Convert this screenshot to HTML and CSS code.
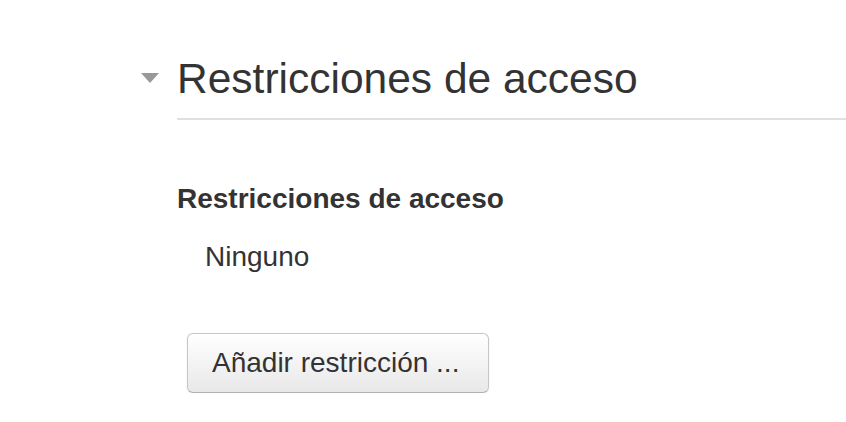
FILE: index.html
```html
<!DOCTYPE html>
<html lang="es">
<head>
  <meta charset="UTF-8">
  <title>Restricciones de acceso</title>
  <link rel="stylesheet" href="styles.css">
</head>
<body>
  <div class="section">
    <h2 class="section-title">
      <span class="toggle"></span>
      Restricciones de acceso
    </h2>
    <div class="section-body">
      <div class="field-label">Restricciones de acceso</div>
      <div class="field-value">Ninguno</div>
      <button type="button" class="btn">Añadir restricción ...</button>
    </div>
  </div>
</body>
</html>
```

FILE: styles.css
```css
* {
  margin: 0;
  padding: 0;
  box-sizing: border-box;
  font-family: 'Liberation Sans', Arial, sans-serif;
}

body {
  background: #fff;
  color: #333;
  padding: 53px 0 0 177px;
}

.section-title {
  position: relative;
  font-size: 42.5px;
  font-weight: normal;
  line-height: 52px;
  padding-bottom: 13px;
  border-bottom: 2px solid #e0e0e0;
}

.toggle {
  position: absolute;
  left: -36px;
  top: 20px;
  width: 0;
  height: 0;
  border-left: 9px solid transparent;
  border-right: 9px solid transparent;
  border-top: 10px solid #999;
}

.section-body {
  padding-top: 62px;
  font-size: 28px;
  line-height: 34px;
}

.field-label {
  font-weight: bold;
}

.field-value {
  margin: 24px 0 0 28px;
}

.btn {
  display: block;
  margin: 59px 0 0 10px;
  width: 302px;
  height: 60px;
  padding: 0 24px;
  text-align: left;
  font-size: 28px;
  color: #333;
  background: linear-gradient(to bottom, #fff, #e8e8e8);
  border: 1px solid #c6c6c6;
  border-bottom-color: #b0b0b0;
  border-radius: 6px;
  box-shadow: 0 1px 2px rgba(0, 0, 0, 0.08);
}
```
